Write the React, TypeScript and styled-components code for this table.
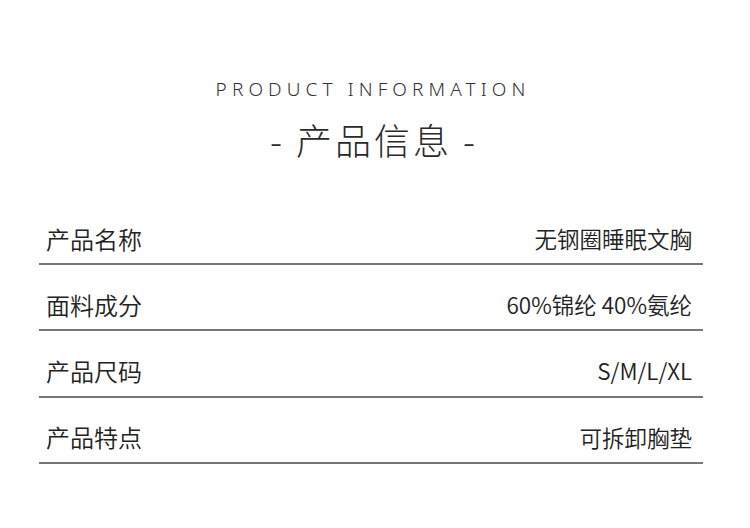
import styled, { createGlobalStyle } from "styled-components";

const GlobalStyle = createGlobalStyle`
  body {
    margin: 0;
    background: #fff;
    font-family: "Noto Sans", "Noto Sans CJK SC", sans-serif;
  }
`;

const rows = [
  { label: "产品名称", value: "无钢圈睡眠文胸" },
  { label: "面料成分", value: "60%锦纶 40%氨纶" },
  { label: "产品尺码", value: "S/M/L/XL" },
  { label: "产品特点", value: "可拆卸胸垫" },
];

const App = () => {
  return (
    <Page>
      <GlobalStyle />
      <Header>
        <EnTitle>PRODUCT INFORMATION</EnTitle>
        <CnTitle>- 产品信息 -</CnTitle>
      </Header>
      <Table>
        {rows.map((r) => (
          <Row key={r.label}>
            <Label>{r.label}</Label>
            <Value>{r.value}</Value>
          </Row>
        ))}
      </Table>
    </Page>
  );
};

export default App;

const Page = styled.div`
  width: 750px;
  height: 528px;
  background: #fff;
  overflow: hidden;
`;

const Header = styled.div`
  display: flex;
  flex-direction: column;
  align-items: center;
  padding-top: 76px;
`;

const EnTitle = styled.div`
  font-family: "Noto Sans", sans-serif;
  font-weight: 300;
  font-size: 19px;
  letter-spacing: 5.1px;
  color: #333;
  line-height: 26px;
  padding-right: 4px;
`;

const CnTitle = styled.div`
  font-family: "Noto Sans CJK SC", sans-serif;
  font-weight: 300;
  font-size: 36px;
  letter-spacing: 3px;
  color: #2a2a2a;
  line-height: 50px;
  margin-top: 12px;
  padding-right: 2px;
`;

const Table = styled.div`
  margin: 35px 47px 0 39px;
`;

const Row = styled.div`
  display: flex;
  justify-content: space-between;
  align-items: center;
  box-sizing: content-box;
  height: 48px;
  padding: 15px 11px 1px 7px;
  border-bottom: 2px solid #777;
  & + & {
    height: 48.3px;
  }
`;

const Label = styled.div`
  font-family: "Noto Sans CJK SC", sans-serif;
  font-weight: 350;
  font-size: 24px;
  color: #222;
`;

const Value = styled.div`
  font-family: "Noto Sans CJK SC", sans-serif;
  font-weight: 350;
  font-size: 22.5px;
  color: #222;
`;
